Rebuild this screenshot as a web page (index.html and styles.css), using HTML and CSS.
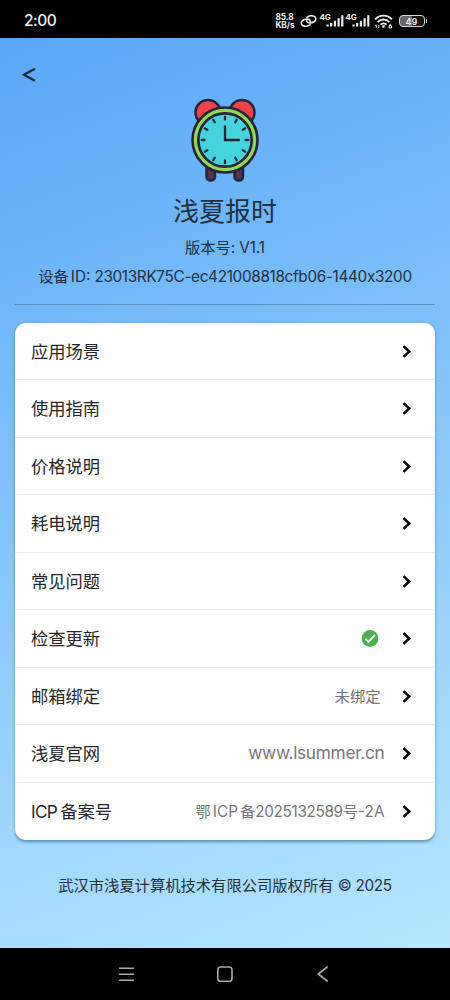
FILE: index.html
```html
<!DOCTYPE html>
<html lang="zh-CN">
<head>
<meta charset="utf-8">
<title>浅夏报时</title>
<link rel="stylesheet" href="styles.css">
</head>
<body>
<svg class="defs" aria-hidden="true">
  <symbol id="chev" viewBox="0 0 10 14"><path d="M1.500 2.100 7.300 7.500 1.500 12.900" fill="none" stroke="#050505" stroke-width="2.500"/></symbol>
  <symbol id="bars" viewBox="0 0 18 13"><path d="M1.500 10.500v2M5.200 9v3.500M8.900 6.800v5.700M12.600 4.200v8.300M16.300 1.200v11.300" fill="none" stroke="#eee" stroke-width="2.200"/></symbol>
</svg>
<header class="status">
  <span class="clock">2:00</span>
  <div class="tray">
    <span class="speed">85.8<br>KB/s</span>
    <svg class="link" viewBox="0 0 18 14" fill="none" stroke="#e8e8e8" stroke-width="1.700" stroke-linecap="round"><path d="M7.300 5.800c-.6 1.800.7 3.400 3 3.200 3.500-.2 6.600-1.700 6.400-4.400-.2-2.400-2.700-3.500-5.400-3.100-1.500.2-2.900.8-4 1.700"/><path d="M10.700 8.200c.6-1.800-.7-3.400-3-3.200C4.200 5.200 1.100 6.700 1.300 9.400c.2 2.400 2.700 3.500 5.400 3.100 1.500-.2 2.900-.8 4-1.700"/></svg>
    <span class="net">4G</span><svg class="bars"><use href="#bars"/></svg>
    <span class="net second">4G</span><svg class="bars"><use href="#bars"/></svg>
    <svg class="wifi" viewBox="0 0 19 15" fill="none" stroke="#eee" stroke-width="1.900"><path d="M1 5.300C5.800.4 13.200.4 18 5.300M3.700 8.100c3.300-3.400 8.300-3.400 11.600 0M6.500 10.600c1.700-1.700 4.300-1.700 6 0"/><path d="M9.500 11.200v2.500" stroke-width="2.400"/><path d="M2.300 13.800v-3M1.200 11.700l1.100-1.100M4.800 10.800v3M3.900 12.800l.9 1" stroke-width=".9"/><path d="M16.800 10.200c-1.200.6-1.700 1.500-1.700 2.400a1.300 1.300 0 1 0 1.300-1.200" stroke-width="1.200"/></svg>
    <span class="battery"><span class="level">49</span></span><i class="tip"></i>
  </div>
</header>
<main class="page">
  <svg class="back" viewBox="0 0 14 16"><path d="M13 1.800 1.800 7.800 13 13.800" fill="none" stroke="#1d2b38" stroke-width="2.200"/></svg>
  <section class="hero">
    <svg class="alarm" viewBox="0 0 70 84" stroke="#252438">
      <g stroke-width="2.500"><rect x="16.500" y="67" width="8.500" height="15.500" rx="4" fill="#53344c"/><rect x="44.500" y="67" width="8.500" height="15.500" rx="4" fill="#53344c"/>
      <circle cx="18" cy="14.500" r="12.500" fill="#ee4249"/><circle cx="52" cy="14.500" r="12.500" fill="#ee4249"/></g>
      <circle cx="35" cy="42" r="32.500" fill="#91da52" stroke-width="2.600"/>
      <circle cx="35" cy="42" r="26.700" fill="#45d3dc" stroke-width="2.700"/>
      <g fill="none" stroke-width="2.300" stroke-linecap="round"><path id="tick" d="M35 18.700v2.800M35 62.500v2.800M11.700 42h2.800M55.500 42h2.800"/><use href="#tick" transform="rotate(30 35 42)"/><use href="#tick" transform="rotate(60 35 42)"/><path d="M35 28.500V42h14"/></g>
    </svg>
    <h1>浅夏报时</h1>
    <p class="version">版本号: <span>V1.1</span></p>
    <p class="device">设备<span class="tag">ID:</span><span class="id">23013RK75C-ec421008818cfb06-1440x3200</span></p>
  </section>
  <hr>
  <nav class="card">
    <a class="row"><span>应用场景</span><svg class="chev"><use href="#chev"/></svg></a>
    <a class="row"><span>使用指南</span><svg class="chev"><use href="#chev"/></svg></a>
    <a class="row"><span>价格说明</span><svg class="chev"><use href="#chev"/></svg></a>
    <a class="row"><span>耗电说明</span><svg class="chev"><use href="#chev"/></svg></a>
    <a class="row"><span>常见问题</span><svg class="chev"><use href="#chev"/></svg></a>
    <a class="row"><span>检查更新</span><svg class="ok" viewBox="0 0 18 18"><circle cx="9" cy="9.500" r="8.400" fill="#4caf50"/><path d="m4.300 9.900 3.100 3.100 6.400-6.800" fill="none" stroke="#fff" stroke-width="1.900"/></svg><svg class="chev"><use href="#chev"/></svg></a>
    <a class="row"><span>邮箱绑定</span><span class="value unbound">未绑定</span><svg class="chev"><use href="#chev"/></svg></a>
    <a class="row"><span>浅夏官网</span><span class="value site">www.lsummer.cn</span><svg class="chev"><use href="#chev"/></svg></a>
    <a class="row"><span><span class="icp">ICP</span>备案号</span><span class="value record">鄂<b class="gap">ICP</b>备<b class="num">2025132589</b>号<b>-2A</b></span><svg class="chev"><use href="#chev"/></svg></a>
  </nav>
  <footer class="copy">武汉市浅夏计算机技术有限公司版权所有 <span>© 2025</span></footer>
</main>
<div class="navbar">
  <svg viewBox="0 0 18 18"><path d="M1.500 3.200h14M1.500 9.200h14M1.500 15.200h14"/></svg>
  <svg viewBox="0 0 18 18"><rect x="1.800" y="2" width="14.200" height="14.200" rx="2.800"/></svg>
  <svg viewBox="0 0 18 18"><path d="M13.200 2 4.300 9l8.900 7"/></svg>
</div>
</body>
</html>
```
FILE: styles.css
```css
* { box-sizing: border-box; }
body {
  margin: 0;
  width: 450px;
  height: 1000px;
  overflow: hidden;
  display: flex;
  flex-direction: column;
  background: #000;
  font-family: Inter, "Noto Sans CJK SC", sans-serif;
  color: #23303b;
}
svg { display: block; flex: none; }
.defs { position: absolute; width: 0; height: 0; }

.status {
  height: 38px;
  flex: none;
  display: flex;
  justify-content: space-between;
  padding: 0 23px 0 24px;
  color: #f2f2f2;
}
.clock { font-size: 15.500px; font-weight: 500; line-height: 42px; letter-spacing: -.5px; }
.tray { display: flex; align-items: flex-start; padding-top: 13px; }
.speed { width: 20px; margin-right: 4px; font-size: 8.300px; font-weight: 700; line-height: 8px; letter-spacing: -.1px; white-space: nowrap; }
.link { width: 17px; height: 14px; margin-right: 3px; margin-top: 1px; }
.net { width: 11px; margin-right: -5px; font-size: 8px; font-weight: 700; line-height: 8px; letter-spacing: -.2px; }
.net.second { margin-left: 2px; }
.bars { width: 18px; height: 13px; margin-top: 1px; }
.wifi { width: 19px; height: 15px; margin-left: 4px; margin-top: 1px; }
.battery { width: 26px; height: 12px; margin: 2px 1px 0 6px; border: 1.500px solid #d8d8d8; border-radius: 4px; background: linear-gradient(90deg, #666 49%, #151515 49%); }
.level { display: block; text-align: center; font-size: 9px; line-height: 11px; font-weight: 600; }
.tip { width: 1.500px; height: 4px; margin-top: 6px; border-radius: 1px; background: #ddd; }

.page {
  height: 910px;
  flex: none;
  padding: 0 15px;
  display: flex;
  flex-direction: column;
  background: linear-gradient(160deg, #59a7f8 0%, #b6e6ff 100%);
}
.back { width: 14px; height: 16px; margin: 29px 0 0 7px; }
.hero { display: flex; flex-direction: column; align-items: center; margin-top: 15px; }
.alarm { width: 70px; height: 84px; }
h1 { margin: 11px 0 0; font-size: 26px; line-height: 38px; font-weight: 400; white-space: nowrap; }
p { margin: 0; font-size: 15.300px; white-space: nowrap; }
.version { margin-top: 6px; line-height: 22px; letter-spacing: -.1px; }
.device { display: flex; margin-top: 6px; line-height: 24px; }
.tag { margin: 0 4px 0 2px; }
.id { letter-spacing: -.32px; }
hr { width: 420px; height: 1px; margin: 15px 0 17.500px; border: 0; background: #5c8fbf; }

.card { flex: none; border-radius: 11px; background: #fff; box-shadow: 0 1.500px 3px rgba(25, 65, 95, .5); color: #262626; }
.row { display: flex; align-items: center; height: 57.500px; padding: 0 23.500px 0 16px; border-bottom: 1px solid #e9e9e7; font-size: 17.300px; }
.row > span { padding-bottom: 1.500px; }
.row:last-child { height: 57px; border-bottom: 0; }
.chev { width: 10px; height: 14px; margin-left: auto; }
.value { margin-left: auto; color: #777; font-size: 15.300px; }
.value + .chev { margin-left: 17px; }
.unbound + .chev { margin-left: 21px; }
.ok { width: 18px; height: 18px; margin-left: auto; }
.ok + .chev { margin-left: 22.500px; }
.site { font-size: 17.300px; letter-spacing: -.3px; }
.icp { margin-right: 3px; letter-spacing: -.7px; }
.record b { font-weight: 400; }
.record .gap { margin: 0 2px; }
.record .num { letter-spacing: -.33px; }
.copy { margin-top: 34px; text-align: center; font-size: 15.300px; line-height: 24px; white-space: nowrap; }
.copy span { letter-spacing: -.3px; }

.navbar { height: 52px; flex: none; display: flex; justify-content: center; align-items: center; gap: 80px; }
.navbar svg { width: 18px; height: 18px; fill: none; stroke: #aaa; stroke-width: 1.600; stroke-linecap: round; stroke-linejoin: round; }
```
